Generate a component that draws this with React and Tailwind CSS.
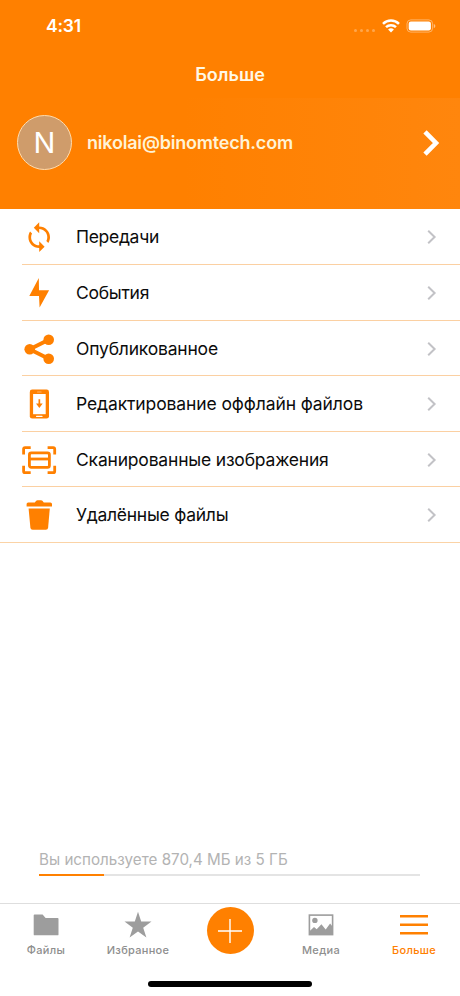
const ORANGE = '#ff8000';

function SyncIcon() {
  return (
    <svg width="36" height="36" viewBox="0 0 36 36" fill={ORANGE}>
      <g transform="translate(2 2) scale(1.35)">
        <path d="M12 4V1L8 5l4 4V6c3.31 0 6 2.69 6 6 0 1.01-.25 1.97-.7 2.8l1.46 1.46C19.54 15.03 20 13.57 20 12c0-4.42-3.58-8-8-8zm0 14c-3.31 0-6-2.69-6-6 0-1.01.25-1.97.7-2.8L5.24 7.74C4.46 8.97 4 10.43 4 12c0 4.42 3.58 8 8 8v3l4-4-4-4v3z" />
      </g>
    </svg>
  );
}

function BoltIcon() {
  return (
    <svg width="36" height="36" viewBox="0 0 36 36" fill={ORANGE}>
      <path d="M17.8 3 8.3 21H18l.6 11.5L28.1 15.2H18z" />
    </svg>
  );
}

function ShareIcon() {
  return (
    <svg width="36" height="36" viewBox="0 0 36 36" fill={ORANGE}>
      <path d="M27.7 8.7 8.7 18.3l19 9.4" fill="none" stroke={ORANGE} strokeWidth="3.9" />
      <circle cx="8.7" cy="18.3" r="5.3" />
      <circle cx="27.7" cy="8.7" r="5.3" />
      <circle cx="27.7" cy="27.7" r="5.3" />
    </svg>
  );
}

function OfflineIcon() {
  return (
    <svg width="36" height="36" viewBox="0 0 36 36" fill={ORANGE}>
      <rect x="8.8" y="3.6" width="19.2" height="29" rx="2.4" />
      <rect x="12.1" y="8" width="12.6" height="20.2" fill="#fff" />
      <rect x="16" y="5.4" width="4.6" height="1" rx=".5" fill="#ffb466" />
      <rect x="15" y="29.8" width="6.6" height="1.3" rx=".65" fill="#fff" />
      <path d="M17.5 13.2h1.7v4.2h2.5l-3.35 4.6L15 17.4h2.5z" />
    </svg>
  );
}

function ScanIcon() {
  return (
    <svg width="36" height="36" viewBox="0 0 36 36" fill="none" stroke={ORANGE} strokeWidth="2.8">
      <path d="M2.6 12.5V7.1q0-1.5 1.5-1.5h5.6M26.6 5.6h5.6q1.5 0 1.5 1.5v5.4M33.7 23.8v5.4q0 1.5-1.5 1.5h-5.6M9.7 30.7H4.1q-1.5 0-1.5-1.5v-5.4" />
      <rect x="8.4" y="10.9" width="20" height="14.4" rx="1.8" />
      <path d="M8.4 17h20" />
    </svg>
  );
}

function TrashIcon() {
  return (
    <svg width="36" height="36" viewBox="0 0 36 36" fill={ORANGE}>
      <path d="M7.2 5.4h6.6l1.4-1.6q.5-.6 1.3-.6h3.6q.8 0 1.3.6l1.4 1.6h6.6q1.6 0 1.6 1.6v2.6H5.6V7q0-1.6 1.6-1.6z" />
      <path d="M7.6 11.6h21.2l-1.7 19.2q-.2 2-2.2 2H11.6q-2 0-2.2-2z" />
    </svg>
  );
}

function Chevron() {
  return (
    <svg width="10" height="16" viewBox="0 0 10 16" fill="none" stroke="#c2c2c6" strokeWidth="2">
      <path d="M1.2 1.8 7.6 8l-6.4 6.2" />
    </svg>
  );
}

const items = [
  { label: 'Передачи', Icon: SyncIcon, row: 'h-14', text: 'tracking-[-0.3px]' },
  { label: 'События', Icon: BoltIcon, row: 'h-14', text: 'tracking-[-0.27px]' },
  { label: 'Опубликованное', Icon: ShareIcon, row: 'h-[55px]', text: 'tracking-[-0.2px]' },
  { label: 'Редактирование оффлайн файлов', Icon: OfflineIcon, row: 'h-14', text: 'tracking-[-0.11px]' },
  { label: 'Сканированные изображения', Icon: ScanIcon, row: 'h-[55px]', text: 'tracking-[-0.19px]' },
  { label: 'Удалённые файлы', Icon: TrashIcon, row: 'h-[55px]', text: 'tracking-[-0.26px]' },
];

function StatusBar() {
  return (
    <div className="flex h-[50px] items-center pl-[46px] pr-6 pt-[2px] text-white">
      <span className="text-[17.5px] font-semibold tracking-[-0.2px]">4:31</span>
      <div className="ml-auto flex items-center">
        <div className="mr-[7px] mt-[8px] flex gap-[3px]">
          {[0, 1, 2, 3].map((i) => (
            <span key={i} className="h-[3px] w-[3px] rounded-full bg-white/30" />
          ))}
        </div>
        <svg className="-mt-px" width="18" height="14" viewBox="0 0 18 14" fill="none" stroke="#fff" strokeWidth="2.5">
          <path d="M1 4.9a11.4 11.4 0 0 1 16 0M4 8.2a7.2 7.2 0 0 1 10 0" />
          <path d="M9 13.6 6.1 10.6a4.1 4.1 0 0 1 5.8 0z" fill="#fff" stroke="none" />
        </svg>
        <svg className="-mt-px ml-[6px]" width="30" height="14" viewBox="0 0 30 14" fill="#fff">
          <rect x="1" y=".9" width="25.6" height="12.2" rx="3.8" fill="none" stroke="#fff" strokeOpacity=".4" />
          <rect x="2.7" y="2.5" width="22.2" height="9" rx="2.2" />
          <path d="M27.8 5v4.2q1.6-.6 1.6-2.1T27.8 5z" opacity=".5" />
        </svg>
      </div>
    </div>
  );
}

function Tab({ label, active, children }) {
  return (
    <div className={active ? 'flex w-[92px] flex-col items-center text-[#ff8000]' : 'flex w-[92px] flex-col items-center text-[#8e8e8e]'}>
      <div className="mt-[6px] flex h-[30px] items-center">{children}</div>
      <span className="mt-[2px] text-[11px] font-medium leading-[16px] tracking-[0.3px]">{label}</span>
    </div>
  );
}

export default function App() {
  return (
    <div className="flex h-[996px] w-[460px] flex-col overflow-hidden bg-white font-['Inter','Liberation_Sans',sans-serif]">
      <header className="flex h-[209px] flex-col bg-[#ff8000]">
        <StatusBar />
        <h1 className="flex h-12 items-center justify-center text-[18px] font-semibold text-[#fff8e6]">Больше</h1>
        <div className="flex h-[111px] items-start bg-gradient-to-r from-[#ff8000] from-40% to-[#ff860d] pl-[17px] pr-[20px] pt-[17px]">
          <div className="flex h-[55px] w-[55px] items-center justify-center rounded-full border border-[#ffdcae] bg-[#cf9c6b] text-[29px] text-white">N</div>
          <span className="ml-[15px] flex h-[55px] items-center text-[18px] font-semibold tracking-[-0.2px] text-[#fff3d6]">nikolai@binomtech.com</span>
          <svg className="ml-auto mt-[14px]" width="17" height="28" viewBox="0 0 17 28" fill="none" stroke="#fff" strokeWidth="4.6">
            <path d="M2 2.8 13 14 2 25.2" />
          </svg>
        </div>
      </header>

      <ul className="border-b border-[#fbd3a6]">
        {items.map(({ label, Icon, row, text }, i) => (
          <li key={label} className={`flex pl-[22px] ${row}`}>
            <div className={i < items.length - 1 ? 'flex flex-1 items-center border-b border-[#fbd0a2] pr-[23px] pt-px' : 'flex flex-1 items-center pr-[23px] pt-px'}>
              <div className="-ml-px w-[55px]"><Icon /></div>
              <span className={`flex-1 whitespace-nowrap pt-px text-[17.5px] text-[#0c0c0c] ${text}`}>{label}</span>
              <Chevron />
            </div>
          </li>
        ))}
      </ul>

      <section className="mt-auto px-[39px] pb-[27px]">
        <p className="whitespace-nowrap text-[15.2px] leading-6 text-[#b3b3b3]">Вы используете 870,4 МБ из 5 ГБ</p>
        <div className="mt-[2px] h-[2.5px] w-[381px] bg-[#e4e4e4]">
          <div className="h-full w-[64.5px] bg-[#ff8000]" />
        </div>
      </section>

      <nav className="flex h-[78px] border-t border-[#dedede]">
        <Tab label="Файлы">
          <svg width="26" height="24" viewBox="0 0 26 24" fill="#9d9d9d">
            <path d="M1.6 1.4h8l3 3.5h12q.9 0 .9.9v15.6q0 .9-.9.9H1.6q-.9 0-.9-.9V2.3q0-.9.9-.9z" />
          </svg>
        </Tab>
        <Tab label="Избранное">
          <svg width="28" height="28" viewBox="0 0 28 28" fill="#9d9d9d">
            <path d="m14 .8 3.2 9.8h10.3l-8.3 6.1 3.2 9.8L14 20.4l-8.4 6.1 3.2-9.8L.5 10.6h10.3z" />
          </svg>
        </Tab>
        <div className="flex w-[92px] justify-center pt-[3px]">
          <div className="flex h-[47px] w-[47px] items-center justify-center rounded-full bg-[#ff8000]">
            <svg width="26" height="26" viewBox="0 0 26 26" stroke="#fff" strokeWidth="1.4">
              <path d="M13 1v24M1 13h24" />
            </svg>
          </div>
        </div>
        <div className="-ml-px mr-px flex">
          <Tab label="Медиа">
            <svg width="26" height="24" viewBox="0 0 26 24" fill="#9d9d9d">
              <rect x="1.4" y="2.1" width="23.2" height="19.5" fill="none" stroke="#9d9d9d" strokeWidth="1.6" />
              <circle cx="6.9" cy="7.4" r="2.7" />
              <path d="M1.5 21.5v-3.3l4.5-4.1 2.7 2.1 4.7-5 4.3 5.3 4.4-5.9 2.6 3.2v7.7z" />
            </svg>
          </Tab>
        </div>
        <Tab label="Больше" active>
          <svg width="28" height="24" viewBox="0 0 28 24" stroke="#ff8000" strokeWidth="2.6">
            <path d="M0 3.2h28M0 11.8h28M0 20.2h28" />
          </svg>
        </Tab>
      </nav>
      <div className="flex h-[15px] shrink-0 justify-center">
        <div className="h-[5.5px] w-[164px] rounded-full bg-black" />
      </div>
    </div>
  );
}
